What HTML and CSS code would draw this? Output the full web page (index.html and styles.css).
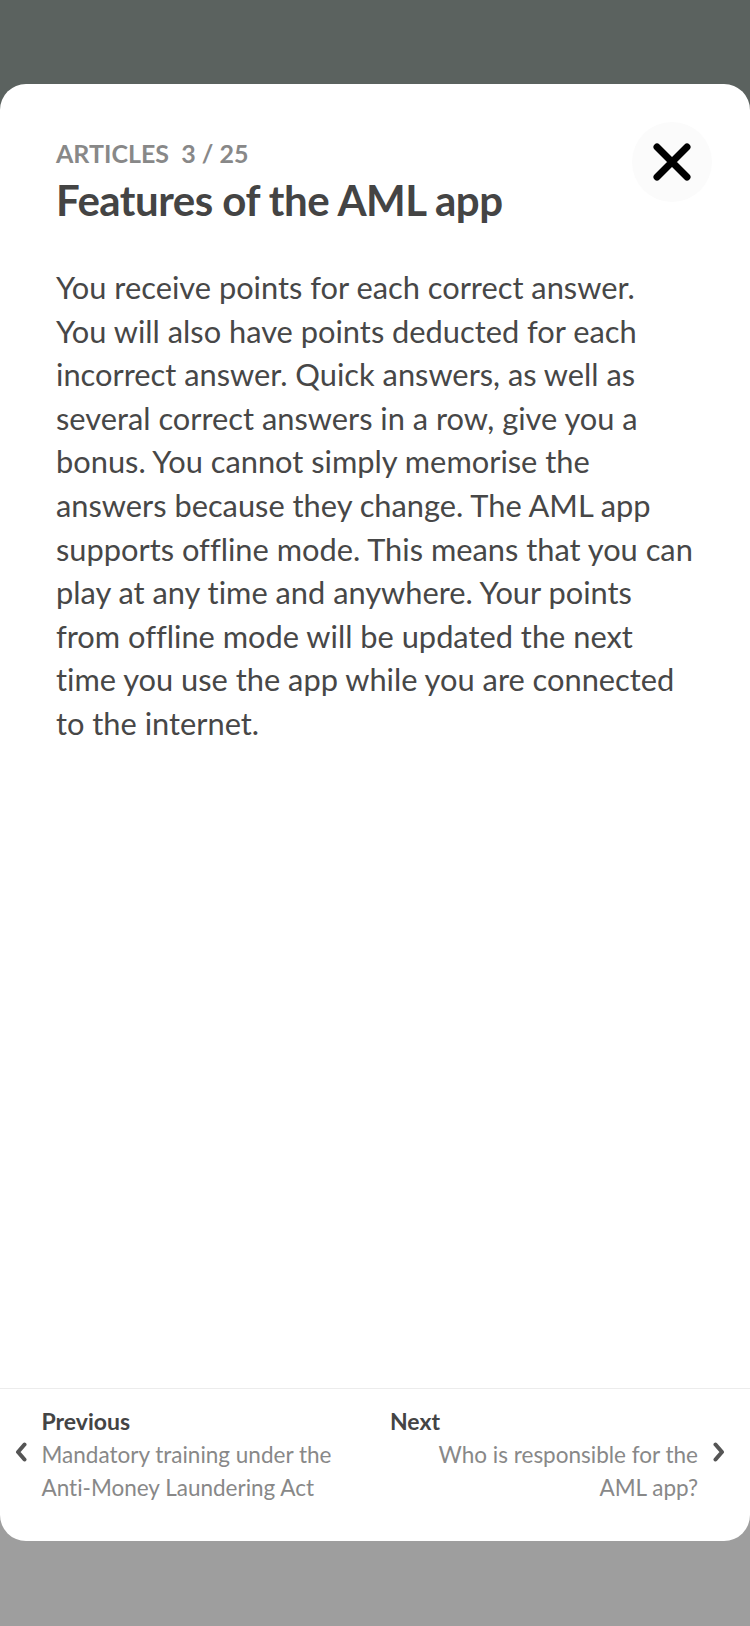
FILE: index.html
```html
<!DOCTYPE html>
<html lang="en">
<head>
<meta charset="utf-8">
<title>Features of the AML app</title>
<link rel="stylesheet" href="styles.css">
</head>
<body>
<div class="sheet">
  <header class="head">
    <div class="head-text">
      <div class="kicker">ARTICLES&nbsp; 3 / 25</div>
      <h1 class="title">Features of the AML app</h1>
    </div>
    <button class="close" aria-label="Close">
      <svg width="40" height="40" viewBox="0 0 40 40"><path d="M5 5 L35 35 M35 5 L5 35" stroke="#000" stroke-width="7" stroke-linecap="round" fill="none"/></svg>
    </button>
  </header>
  <p class="body">You receive points for each correct answer. You&nbsp;will also have points deducted for each incorrect answer. Quick answers, as well as several correct answers in a row, give you a bonus. You cannot simply memorise the answers because they change. The AML app supports offline mode. This means that you can play at any time and anywhere. Your points from offline mode will be updated the next time you use the app while you are connected to the internet.</p>
  <div class="spacer"></div>
  <nav class="foot">
    <a class="nav prev">
      <svg class="chev" width="12" height="20" viewBox="0 0 12 20"><path d="M9.5 2.5 L3 10 L9.5 17.5" stroke="#555" stroke-width="4" stroke-linecap="round" stroke-linejoin="round" fill="none"/></svg>
      <div class="nav-text">
        <div class="nav-label">Previous</div>
        <div class="nav-desc">Mandatory training under the Anti-Money Laundering Act</div>
      </div>
    </a>
    <a class="nav next">
      <div class="nav-text">
        <div class="nav-label">Next</div>
        <div class="nav-desc right">Who is responsible for the AML app?</div>
      </div>
      <svg class="chev" width="12" height="20" viewBox="0 0 12 20"><path d="M2.5 2.5 L9 10 L2.5 17.5" stroke="#555" stroke-width="4" stroke-linecap="round" stroke-linejoin="round" fill="none"/></svg>
    </a>
  </nav>
</div>
</body>
</html>
```
FILE: styles.css
```css
html, body {
  margin: 0;
  padding: 0;
}
body {
  width: 750px;
  height: 1626px;
  background: linear-gradient(#5b625f 0, #5b625f 800px, #9e9e9e 800px, #9e9e9e 100%);
  font-family: Lato, "Open Sans", sans-serif;
  font-variant-ligatures: none;
  overflow: hidden;
}
.sheet {
  margin-top: 84px;
  height: 1457px;
  background: #fff;
  border-radius: 26px;
  display: flex;
  flex-direction: column;
  box-sizing: border-box;
}
.head {
  display: flex;
  justify-content: space-between;
  align-items: flex-start;
  padding: 54px 38px 0 56px;
}
.kicker {
  font-size: 25px;
  font-weight: 700;
  color: #888;
  line-height: 30px;
}
.title {
  margin: 6px 0 0;
  font-size: 42px;
  font-weight: 700;
  color: #444;
  line-height: 52px;
  letter-spacing: -0.5px;
}
.close {
  width: 80px;
  height: 80px;
  margin-top: -16px;
  border: none;
  border-radius: 50%;
  background: #fbfbfb;
  display: flex;
  align-items: center;
  justify-content: center;
  padding: 0;
}
.body {
  margin: 40px 0 0;
  padding: 0 52px 0 56px;
  font-size: 30.8px;
  line-height: 43.6px;
  color: #474747;
}
.spacer {
  flex: 1;
}
.foot {
  border-top: 1px solid #ececec;
  height: 153px;
  box-sizing: border-box;
  display: flex;
  padding-top: 16px;
}
.nav {
  flex: 1;
  display: flex;
  align-items: flex-start;
}
.prev {
  padding-left: 15px;
}
.prev .chev {
  flex: none;
  margin-top: 37px;
  margin-right: 14.5px;
}
.next {
  padding-left: 15px;
}
.next .nav-text {
  width: 308px;
}
.next .chev {
  flex: none;
  margin-top: 37px;
  margin-left: 15px;
}
.nav-label {
  font-size: 23px;
  font-weight: 700;
  color: #444;
  line-height: 32px;
}
.nav-desc {
  margin-top: 1px;
  font-size: 22.5px;
  color: #888;
  line-height: 33px;
}
.nav-desc.right {
  text-align: right;
  padding-left: 8px;
}
```
